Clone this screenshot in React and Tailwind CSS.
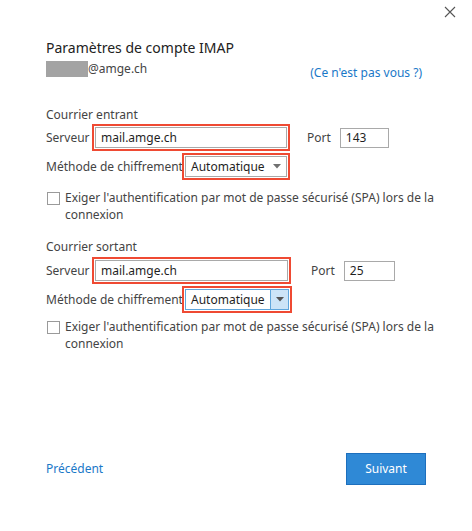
import React from "react";

function ServerRow({ redW, portGap, portInputW, portValue }) {
  return (
    <div className="flex items-center h-[27px]">
      <span className="w-[46px] shrink-0 whitespace-nowrap">Serveur</span>
      <div className={`${redW} h-[27px] shrink-0 border-2 border-[#ef4a33] p-[1px] flex`}>
        <div className="flex-1 border border-[#a9a9a9] flex items-center px-[5px] text-[#1f1f1f]">
          mail.amge.ch
        </div>
      </div>
      <span className={`${portGap} whitespace-nowrap`}>Port</span>
      <div
        className={`${portInputW} h-[20px] ml-[9px] border border-[#a9a9a9] flex items-center px-[5px] text-[#1f1f1f]`}
      >
        {portValue}
      </div>
    </div>
  );
}

function MethodRow({ redW, focused }) {
  return (
    <div className="flex items-center h-[27px] mt-[2px]">
      <span className="w-[136px] shrink-0 whitespace-nowrap">Méthode de chiffrement</span>
      <div className={`${redW} h-[27px] shrink-0 border-2 border-[#ef4a33] p-[1px] flex`}>
        {focused ? (
          <div className="flex-1 border border-[#5fa6dc] flex items-center">
            <span className="flex-1 pl-[5px] text-[#1f1f1f] whitespace-nowrap">Automatique</span>
            <span className="w-[18px] h-full bg-[#cce4f7] border-l border-[#5fa6dc] flex items-center justify-center">
              <svg width="8" height="5" viewBox="0 0 8 5">
                <path d="M0 0h8L4 4.5z" fill="#555" />
              </svg>
            </span>
          </div>
        ) : (
          <div className="flex-1 border border-[#a9a9a9] flex items-center bg-white">
            <span className="flex-1 pl-[5px] text-[#1f1f1f] whitespace-nowrap">Automatique</span>
            <span className="w-[18px] flex items-center justify-center">
              <svg width="8" height="5" viewBox="0 0 8 5">
                <path d="M0 0h8L4 4.5z" fill="#707070" />
              </svg>
            </span>
          </div>
        )}
      </div>
    </div>
  );
}

function SpaCheck({ top }) {
  return (
    <div className={`flex items-start ${top}`}>
      <span className="w-[13px] h-[13px] mt-[3px] ml-[1px] border border-[#9a9a9a] bg-white shrink-0" />
      <p className="ml-[5px] w-[372px] shrink-0 leading-[17px]">
        Exiger l'authentification par mot de passe sécurisé (SPA) lors de la connexion
      </p>
    </div>
  );
}

export default function App() {
  return (
    <div
      className="w-[472px] h-[531px] bg-white relative text-[12px] text-[#444]"
      style={{ fontFamily: "'Noto Sans', 'Open Sans', sans-serif" }}
    >
      {/* Close */}
      <button className="absolute right-[16px] top-[6px] w-[12px] h-[12px]">
        <svg width="12" height="12" viewBox="0 0 12 12">
          <path d="M1 1l10 10M11 1L1 11" stroke="#555" strokeWidth="1.1" />
        </svg>
      </button>

      <div className="pl-[46px] pr-[46px] pt-[38px]">
        <h1 className="text-[14px] text-[#222] leading-[20px]">Paramètres de compte IMAP</h1>
        <div className="flex items-start justify-between">
          <div className="flex items-center text-[#444] mt-[2px]">
            <span className="w-[42px] h-[16px] bg-[#a3a3a3]" />
            <span>@amge.ch</span>
          </div>
          <a className="text-[#1a78c8] mt-[6px] mr-[4px]">(Ce n'est pas vous ?)</a>
        </div>

        {/* Incoming */}
        <div className="mt-[24px]">
          <div className="leading-[18px]">Courrier entrant</div>
          <ServerRow redW="w-[198px]" portGap="ml-[17px]" portInputW="w-[49px]" portValue="143" />
          <MethodRow redW="w-[108px]" />
          <SpaCheck top="mt-[9px]" />
        </div>

        {/* Outgoing */}
        <div className="mt-[15px]">
          <div className="leading-[18px]">Courrier sortant</div>
          <div className="mt-[1px]">
            <ServerRow redW="w-[199px]" portGap="ml-[20px]" portInputW="w-[51px]" portValue="25" />
          </div>
          <MethodRow redW="w-[110px]" focused />
          <SpaCheck top="mt-[5px]" />
        </div>

        {/* Footer */}
        <div className="flex items-center justify-between mt-[101px]">
          <a className="text-[#1a78c8]">Précédent</a>
          <button className="w-[80px] h-[32px] bg-[#2f89d6] border border-[#1d6fbd] text-white">
            Suivant
          </button>
        </div>
      </div>
    </div>
  );
}
